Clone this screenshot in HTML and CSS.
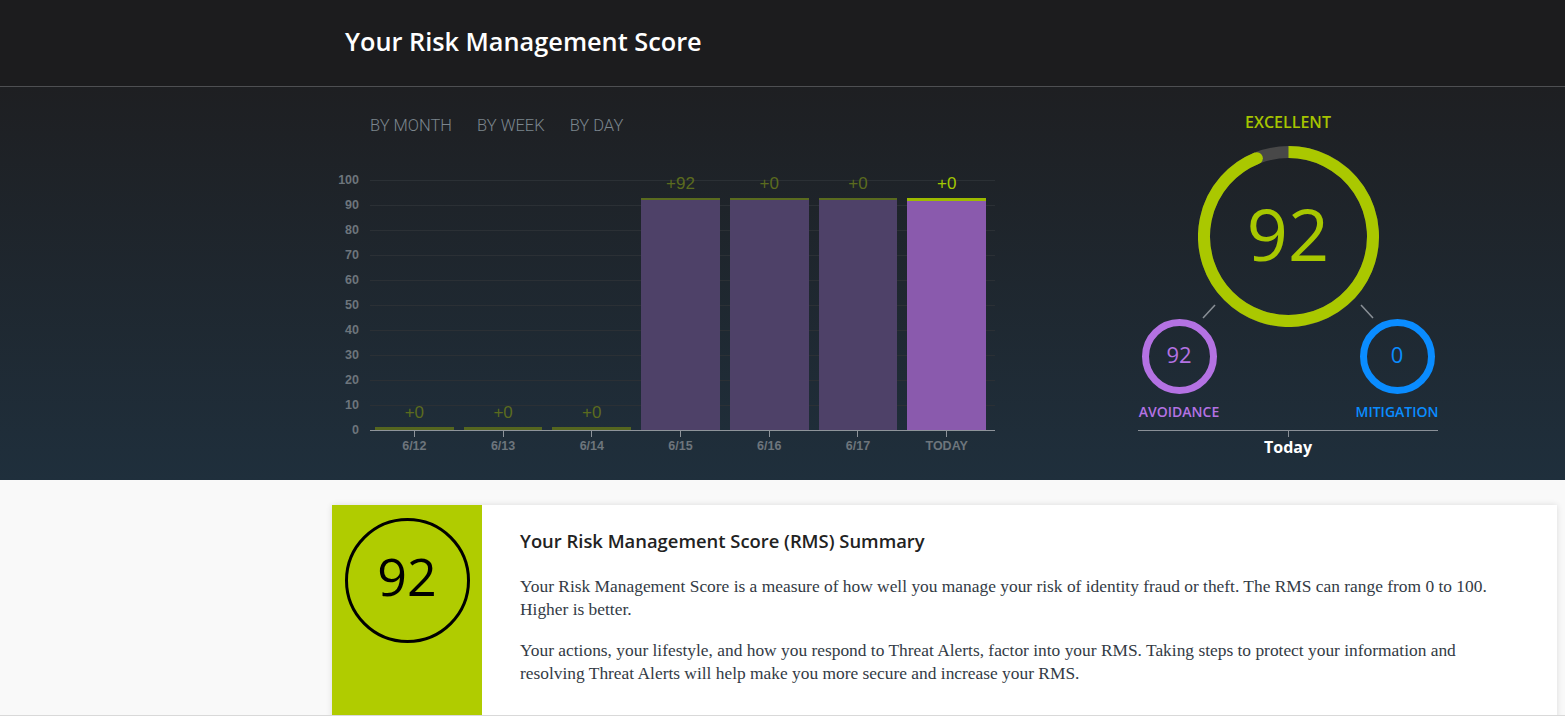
FILE: index.html
```html
<!DOCTYPE html>
<html lang="en">
<head>
<meta charset="utf-8">
<title>Your Risk Management Score</title>
<link rel="stylesheet" href="styles.css">
</head>
<body>
<header class="topbar">
  <h1 class="title">Your Risk Management Score</h1>
</header>
<main>
  <section class="panel">
    <div class="chart-col">
      <nav class="tabs">
        <a class="tab">BY MONTH</a>
        <a class="tab">BY WEEK</a>
        <a class="tab">BY DAY</a>
      </nav>
      <div class="chart">
        <div class="yaxis">
          <span>100</span><span>90</span><span>80</span><span>70</span><span>60</span><span>50</span><span>40</span><span>30</span><span>20</span><span>10</span><span>0</span>
        </div>
        <div class="plot-area">
          <div class="plot">
            <div class="col"><span class="val">+0</span><div class="bar zero"></div></div>
            <div class="col"><span class="val">+0</span><div class="bar zero"></div></div>
            <div class="col"><span class="val">+0</span><div class="bar zero"></div></div>
            <div class="col"><span class="val">+92</span><div class="bar past" style="height:232px"></div></div>
            <div class="col"><span class="val">+0</span><div class="bar past" style="height:232px"></div></div>
            <div class="col"><span class="val">+0</span><div class="bar past" style="height:232px"></div></div>
            <div class="col"><span class="val current-val">+0</span><div class="bar current" style="height:232px"></div></div>
          </div>
          <div class="xaxis">
            <span>6/12</span><span>6/13</span><span>6/14</span><span>6/15</span><span>6/16</span><span>6/17</span><span>TODAY</span>
          </div>
        </div>
      </div>
    </div>

    <div class="gauge-col">
      <div class="rating">EXCELLENT</div>
      <div class="ring">
        <svg class="ring-svg" viewBox="0 0 181 181" width="181" height="181">
          <circle cx="90.5" cy="90.5" r="84.5" fill="none" stroke="#484848" stroke-width="12"/>
          <path d="M90.5 6 A84.5 84.5 0 1 1 58.85 12.15" fill="none" stroke="#aac800" stroke-width="12"/>
          <circle cx="58.85" cy="12.15" r="6" fill="#aac800"/>
          <line x1="17" y1="159" x2="5" y2="172" stroke="#8a9097" stroke-width="1.5"/>
          <line x1="163" y1="159" x2="175" y2="172" stroke="#8a9097" stroke-width="1.5"/>
        </svg>
        <div class="ring-num">92</div>
      </div>
      <div class="subs">
        <div class="sub avoid">
          <div class="sub-ring"><span class="sub-num">92</span></div>
          <div class="sub-label">AVOIDANCE</div>
        </div>
        <div class="sub mitig">
          <div class="sub-ring"><span class="sub-num">0</span></div>
          <div class="sub-label">MITIGATION</div>
        </div>
      </div>
      <div class="today">Today</div>
    </div>
  </section>

  <section class="summary-wrap">
    <article class="card">
      <div class="badge"><div class="badge-ring"><span class="badge-num">92</span></div></div>
      <div class="summary">
        <h2 class="summary-title">Your Risk Management Score (RMS) Summary</h2>
        <p class="summary-text">Your Risk Management Score is a measure of how well you manage your risk of identity fraud or theft. The RMS can range from 0 to 100. Higher is better.</p>
        <p class="summary-text">Your actions, your lifestyle, and how you respond to Threat Alerts, factor into your RMS. Taking steps to protect your information and resolving Threat Alerts will help make you more secure and increase your RMS.</p>
      </div>
    </article>
  </section>
</main>
</body>
</html>
```

FILE: styles.css
```css
* { box-sizing: border-box; margin: 0; padding: 0; }
html, body { background: #f9f9f9; }
body { font-family: "Open Sans", "Noto Sans", sans-serif; width: 1565px; overflow: hidden; }

.topbar {
  height: 87px;
  background: #1c1c1e;
  border-bottom: 1px solid #4e4f52;
  padding-left: 345px;
  display: flex;
  align-items: center;
}
.title { color: #fff; font-size: 25.3px; font-weight: 600; line-height: 32px; margin-top: -4px; }

.panel {
  height: 393px;
  background: linear-gradient(#1e1f22, #1f2f3c);
  display: flex;
  padding: 28px 0 0 329px;
}

.chart-col { width: 666px; }
.tabs { display: flex; gap: 25px; margin-left: 41px; }
.tab { font-family: Roboto, sans-serif; font-weight: 300; font-size: 16.5px; line-height: 20px; color: #7b858d; padding-top: 1px; }

.chart { display: flex; align-items: flex-start; margin-top: 44px; }
.yaxis {
  width: 30px; margin-right: 11px; margin-top: -12.5px;
  display: flex; flex-direction: column; text-align: right;
  font: bold 12.5px "Liberation Sans", Arial, sans-serif; color: #6d757c;
}
.yaxis span { height: 25px; line-height: 25px; }

.plot-area { width: 625px; }
.plot {
  height: 251px;
  border-bottom: 1px solid #8e949a;
  background-image: linear-gradient(#2b3035 1px, transparent 1px);
  background-size: 100% 25px;
  display: flex; align-items: flex-end;
  padding-right: 4px;
}
.col { flex: 1; display: flex; flex-direction: column; align-items: center; padding: 0 5px; }
.val { font: 17px/16px "Liberation Sans", Arial, sans-serif; color: #5b6b1e; margin-bottom: 6px; }
.current-val { color: #a3c800; }
.bar { width: 100%; }
.bar.zero { height: 3px; background: #55661f; }
.bar.past { background: #4e4168; border-top: 2px solid #5a6b1f; }
.bar.current { background: #8a5aad; border-top: 3px solid #9cba00; }

.xaxis { display: flex; padding-right: 4px; }
.xaxis span {
  flex: 1; text-align: center; padding-top: 8px;
  font: bold 12.5px/14px "Liberation Sans", Arial, sans-serif; color: #6d757c;
  background: linear-gradient(#8e949a, #8e949a) center top / 1px 6px no-repeat;
}

.gauge-col { width: 300px; margin-left: 143px; }
.rating { font-size: 16px; font-weight: 600; line-height: 14px; color: #a6c400; text-align: center; margin-bottom: 17px; }
.ring { width: 181px; height: 181px; margin: 0 auto; display: grid; place-items: center; }
.ring > * { grid-area: 1 / 1; }
.ring-svg { display: block; }
.ring-num { font-size: 72px; font-weight: 400; color: #a8c800; line-height: 1; margin-top: -8px; }

.subs { display: flex; justify-content: space-between; margin-top: -8px; }
.sub { display: flex; flex-direction: column; align-items: center; width: 82px; }
.sub-ring {
  width: 75px; height: 75px; border-radius: 50%; border: 7px solid currentColor;
  display: grid; place-items: center; font-size: 22px; line-height: 1;
}
.sub-num { margin-top: -5px; }
.sub-label { margin-top: 9px; font-size: 14px; font-weight: 600; line-height: 18px; white-space: nowrap; }
.avoid { color: #b472e3; }
.mitig { color: #0a8cff; }

.today {
  margin-top: 9px;
  border-top: 1px solid #8a9097;
  background: linear-gradient(#8a9097, #8a9097) center top / 1px 6px no-repeat;
  padding-top: 6px;
  text-align: center; color: #fff; font-size: 16px; font-weight: 700; line-height: 20px;
}

.summary-wrap {
  height: 236px;
  background: #f9f9f9;
  border-bottom: 1px solid #d9d9d9;
  padding: 25px 0 0 332px;
  overflow: hidden;
}
.card { width: 1225px; height: 240px; background: #fff; box-shadow: 0 0 6px rgba(0,0,0,.12); display: flex; }
.badge { width: 150px; background: #b0cc00; padding-top: 13px; display: flex; justify-content: center; align-items: flex-start; }
.badge-ring {
  width: 125px; height: 125px; border: 3px solid #000; border-radius: 50%;
  display: grid; place-items: center; font-size: 52px; color: #000; line-height: 1;
}
.badge-num { margin-top: -9px; }
.summary { flex: 1; padding: 25px 50px 0 38px; }
.summary-title { font-size: 18.4px; font-weight: 600; line-height: 22px; color: #222; margin-bottom: 23px; }
.summary-text { font: 17.4px/22.5px "Liberation Serif", "Times New Roman", serif; color: #333b45; margin-bottom: 19px; }
```
